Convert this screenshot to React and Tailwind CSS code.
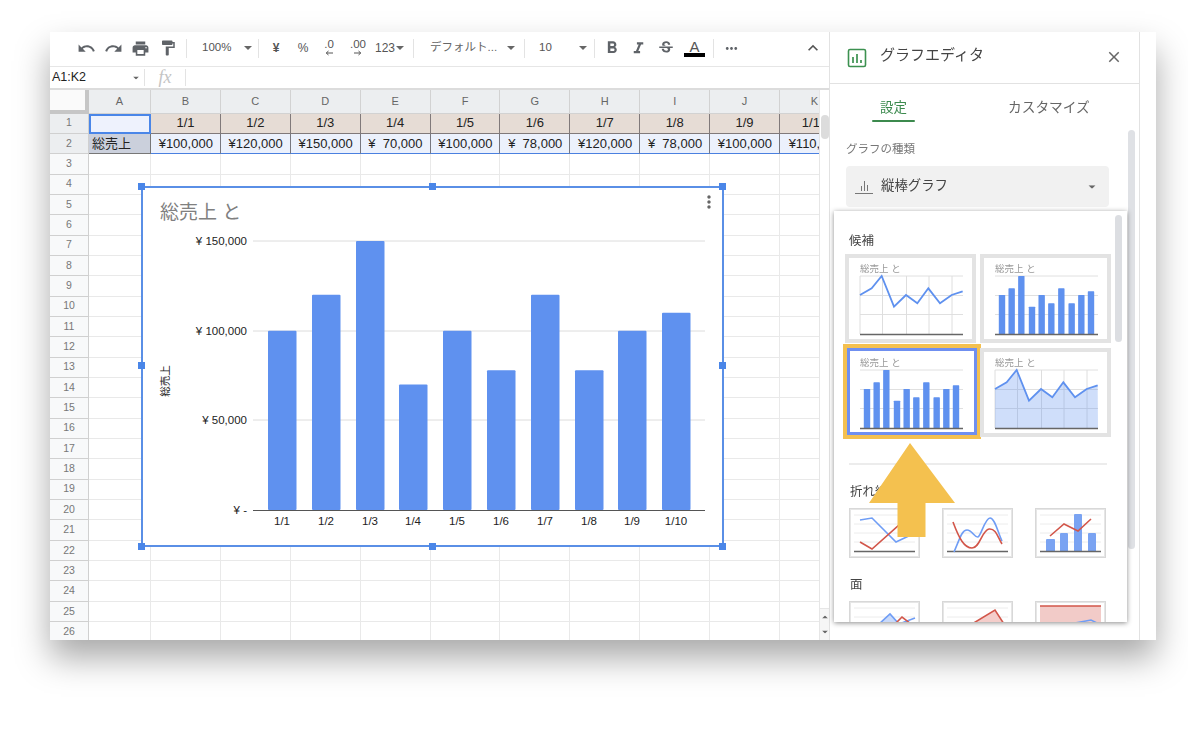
import React from 'react';
import {
  MdUndo, MdRedo, MdPrint, MdFormatPaint, MdFormatBold, MdFormatItalic,
  MdStrikethroughS, MdMoreHoriz, MdExpandLess, MdClose, MdMoreVert,
} from 'react-icons/md';

const COLS = ['B', 'C', 'D', 'E', 'F', 'G', 'H', 'I', 'J', 'K'];
const DATES = ['1/1', '1/2', '1/3', '1/4', '1/5', '1/6', '1/7', '1/8', '1/9', '1/10'];
const SALES = [100, 120, 150, 70, 100, 78, 120, 78, 100, 110];
const ROWS = Array.from({ length: 26 }, (_, i) => i + 1);

const Caret = ({ className = '' }) => (
  <svg width="8" height="4" viewBox="0 0 8 4" className={className}>
    <path d="M0 0h8L4 4z" fill="#666" />
  </svg>
);

const Divider = () => <div className="w-px h-[19px] bg-[#e3e3e3] shrink-0" />;

const ToolBtn = ({ children, w = 'w-[27px]' }) => (
  <div className={`${w} h-[24px] flex items-center justify-center shrink-0 text-[#5f6368]`}>{children}</div>
);

const Decimal = ({ label, dir }) => (
  <div className="flex flex-col items-center leading-none text-[11.5px] text-[#555] -mt-[1px]">
    <span>{label}</span>
    <svg width="8" height="6" viewBox="0 0 8 6" className="-mt-[1px]">
      {dir === 'left'
        ? <path d="M8 3H1.5M3.5 1L1.2 3l2.3 2" fill="none" stroke="#555" />
        : <path d="M0 3h6.5M4.5 1l2.3 2-2.3 2" fill="none" stroke="#555" />}
    </svg>
  </div>
);

const Toolbar = () => (
  <div className="h-[35px] flex items-center pl-[23px] pb-[2px] border-b border-[#e6e6e6] bg-white shrink-0">
    <ToolBtn><MdUndo size={19} /></ToolBtn>
    <ToolBtn><MdRedo size={19} /></ToolBtn>
    <ToolBtn><MdPrint size={19} /></ToolBtn>
    <ToolBtn><MdFormatPaint size={18} /></ToolBtn>
    <div className="w-[5px]" />
    <Divider />
    <div className="w-[71px] flex items-center pl-[15px] text-[11.5px] text-[#555]">
      100%<Caret className="ml-[13px]" />
    </div>
    <Divider />
    <ToolBtn w="w-[34px]"><span className="text-[12px] font-bold text-[#555]">¥</span></ToolBtn>
    <ToolBtn w="w-[20px]"><span className="text-[12px] text-[#555]">%</span></ToolBtn>
    <ToolBtn w="w-[32px]"><Decimal label=".0" dir="left" /></ToolBtn>
    <ToolBtn w="w-[26px]"><Decimal label=".00" dir="right" /></ToolBtn>
    <div className="w-[4px]" />
    <div className="w-[38px] flex items-center text-[12px] text-[#555]">
      123<Caret className="ml-[1px]" />
    </div>
    <Divider />
    <div className="w-[110px] flex items-center pl-[16px] text-[11.5px] text-[#666]">
      <span className="w-[77px] whitespace-nowrap">デフォルト...</span><Caret />
    </div>
    <Divider />
    <div className="w-[69px] flex items-center pl-[14px] text-[11.5px] text-[#555]">
      <span className="w-[40px]">10</span><Caret />
    </div>
    <Divider />
    <div className="w-[3px]" />
    <ToolBtn><MdFormatBold size={20} /></ToolBtn>
    <ToolBtn><MdFormatItalic size={19} /></ToolBtn>
    <ToolBtn><MdStrikethroughS size={18} /></ToolBtn>
    <div className="w-[2px]" />
    <ToolBtn>
      <div className="flex flex-col items-center leading-none">
        <span className="text-[15px] text-[#555] -mb-[1px]">A</span>
        <div className="w-[21px] h-[4px] bg-black" />
      </div>
    </ToolBtn>
    <div className="w-[5px]" />
    <Divider />
    <ToolBtn w="w-[34px]"><MdMoreHoriz size={17} /></ToolBtn>
    <div className="flex-1" />
    <div className="w-[30px] flex items-center pl-[4px] text-[#555]"><MdExpandLess size={20} /></div>
  </div>
);

const FormulaBar = () => (
  <div className="h-[23px] flex items-center border-b-2 border-[#dcdcdc] bg-white shrink-0">
    <div className="w-[94px] flex items-center pl-[2px] text-[12.5px] text-[#222]">
      <span className="w-[80px]">A1:K2</span><Caret className="scale-75" />
    </div>
    <div className="w-px h-[17px] bg-[#e3e3e3]" />
    <div className="w-[40px] text-center text-[18px] italic text-[#c4c4c4] font-['Liberation_Serif',serif] leading-none -mt-[2px]">fx</div>
    <div className="w-px h-[17px] bg-[#e3e3e3]" />
  </div>
);

const money = (v) => (v >= 100 ? `¥${v},000` : `¥  ${v},000`);

const Sheet = () => (
  <div className="grid grid-cols-[39px_62px_repeat(10,69.9px)] grid-rows-[23.5px] auto-rows-[20.35px] w-[769px] bg-white text-[13px] text-[#222]">
    <div className="bg-[#fafafa] border-r-4 border-b-4 border-[#c6c6c6]" />
    <div className="bg-[#eceef0] border-r border-b border-[#d2d2d2] flex items-center justify-center text-[11px] text-[#666]">A</div>
    {COLS.map((c) => (
      <div key={c} className="bg-[#eceef0] border-r border-b border-[#d2d2d2] flex items-center justify-center text-[11px] text-[#666]">{c}</div>
    ))}
    {ROWS.map((r) => (
      <React.Fragment key={r}>
        <div className={`${r < 3 ? 'bg-[#eceef0]' : 'bg-[#f8f9fa]'} border-r border-b border-[#d0d0d0] flex items-center justify-center text-[10.5px] text-[#777]`}>{r}</div>
        {r === 1 && <div className="bg-[#eef2fd] border-2 border-[#4a86e8]" />}
        {r === 2 && <div className="bg-[#cbd0dc] border-r border-b border-[#777] flex items-center pl-[3px] whitespace-nowrap">総売上</div>}
        {r > 2 && <div className="border-r border-b border-[#e9e9e9]" />}
        {COLS.map((c, i) => {
          if (r === 1) {
            return <div key={c} className="bg-[#e6dcd5] border-r border-b border-[#80797a] flex items-center justify-center whitespace-nowrap overflow-hidden">{DATES[i]}</div>;
          }
          if (r === 2) {
            return <div key={c} className="bg-[#ecf1fc] border-r border-b border-r-[#77777f] border-b-[#4a80e0] leading-[19px] text-right pr-[7px] whitespace-pre overflow-hidden">{money(SALES[i])}</div>;
          }
          return <div key={c} className="border-r border-b border-[#e9e9e9]" />;
        })}
      </React.Fragment>
    ))}
  </div>
);

const Handle = ({ className }) => <div className={`absolute w-[7px] h-[7px] bg-[#4a86e8] ${className}`} />;

const barX = [268, 312, 356, 399, 443, 487, 531, 575, 618, 662];

const Chart = () => (
  <div className="absolute left-[91px] top-[96px] w-[583px] h-[361px] bg-white border-2 border-[#5a8fe6]">
    <svg viewBox="143 188 579 357" className="w-full h-full">
      <text x="160" y="219" fontSize="19" fill="#808080">総売上 と</text>
      {[241, 331, 420].map((y) => (
        <line key={y} x1="253" x2="705" y1={y} y2={y} stroke="#dcdcdc" />
      ))}
      {[['¥ 150,000', 245], ['¥ 100,000', 335], ['¥ 50,000', 424], ['¥ -', 514]].map(([t, y]) => (
        <text key={t} x="247" y={y} fontSize="11.5" fill="#222" textAnchor="end">{t}</text>
      ))}
      {SALES.map((v, i) => (
        <rect key={i} x={barX[i]} y={510 - v * 1.793} width="28.5" height={v * 1.793} rx="1" fill="#5f91ef" />
      ))}
      <line x1="253" x2="705" y1="510.5" y2="510.5" stroke="#555" />
      {DATES.map((d, i) => (
        <text key={d} x={barX[i] + 14} y="525" fontSize="11.5" fill="#222" textAnchor="middle">{d}</text>
      ))}
      <text transform="translate(169 381) rotate(-90)" fontSize="10.5" fill="#222" textAnchor="middle">総売上</text>
    </svg>
    <MdMoreVert size={20} className="absolute right-[3px] top-[4px] text-[#666]" />
    <Handle className="-left-[5px] -top-[5px]" />
    <Handle className="left-[286px] -top-[5px]" />
    <Handle className="-right-[4px] -top-[5px]" />
    <Handle className="-left-[5px] top-[174px]" />
    <Handle className="-right-[4px] top-[174px]" />
    <Handle className="-left-[5px] -bottom-[5px]" />
    <Handle className="left-[286px] -bottom-[5px]" />
    <Handle className="-right-[4px] -bottom-[5px]" />
  </div>
);

// same sales data squeezed into the preview card, coordinates in card pixels
const thumbTops = [165, 145, 108, 200, 165, 190, 145, 190, 165, 154].map((y) => y / 3 - 14);
const thumbLineX = [90, 125, 155, 192, 228, 262, 295, 330, 365, 398].map((x) => x / 3 - 15);
const thumbBarX = [21, 50, 79, 111, 140, 169, 199, 230, 259, 288].map((x) => x / 3 + 15);
const linePts = thumbLineX.map((x, i) => `${x},${thumbTops[i]}`).join(' ');

const ThumbBase = ({ vLines }) => (
  <>
    <text x="15" y="17.5" fontSize="9.5" fill="#999">総売上 と</text>
    {[22, 41.5, 60.5].map((y) => <line key={y} x1="15" x2="118" y1={y} y2={y} stroke="#e0e0e0" />)}
    {vLines && [15, 37.5, 61.5, 84, 107].map((x) => <line key={x} x1={x} x2={x} y1="22" y2="80" stroke="#dedede" />)}
  </>
);

const Thumb = ({ kind, className = 'border-4 border-[#e3e3e3] w-[131px] h-[89px]', viewBox = '4 4 123 81' }) => (
  <div className={`bg-white ${className}`}>
    <svg viewBox={viewBox} className="w-full h-full block">
      <ThumbBase vLines={kind !== 'bar'} />
      {kind === 'area' && <polygon points={`15,80 ${linePts} 118,80`} fill="#5f91ef" fillOpacity="0.3" />}
      {kind === 'bar' && thumbTops.map((y, i) => (
        <rect key={i} x={thumbBarX[i] - 3.2} y={y} width="6.4" height={80 - y} rx="0.6" fill="#5f91ef" />
      ))}
      {kind !== 'bar' && <polyline points={linePts} fill="none" stroke="#5f91ef" strokeWidth="1.8" />}
      <line x1="15" x2="118" y1="80.5" y2="80.5" stroke="#666" strokeWidth="1.5" />
    </svg>
  </div>
);

const SmallThumb = ({ children }) => (
  <div className="w-[71px] h-[50px] bg-white border border-[#d8d8d8] outline outline-[#e6e6e6] -outline-offset-2">
    <svg viewBox="1 1 69 48" className="w-full h-full block">
      {[7, 16, 25, 34].map((y) => <line key={y} x1="5" x2="66" y1={y} y2={y} stroke="#ececec" />)}
      {children}
    </svg>
  </div>
);

const Base = () => <line x1="5" x2="66" y1="43.5" y2="43.5" stroke="#666" strokeWidth="1.3" />;
const BLUE = '#6f9df5';
const RED = '#d2564a';

const SectionLabel = ({ children, className = '' }) => (
  <div className={`text-[12.5px] text-[#444] leading-none ${className}`}>{children}</div>
);

const Picker = () => (
  <div className="absolute left-[4px] top-[179px] w-[293px] h-[411px] bg-white shadow-[0_1px_5px_rgba(0,0,0,0.45)] overflow-hidden">
    <div className="pl-[11px] pt-[24px]">
      <SectionLabel className="pl-[4px] h-[19px]">候補</SectionLabel>
      <div className="grid grid-cols-[131px_131px] gap-x-[4px] gap-y-[5px] h-[183px]">
        <Thumb kind="line" />
        <Thumb kind="bar" />
        <Thumb
          kind="bar"
          className="border-[3px] border-[#6f8ff0] outline-4 outline-[#f4c04f] w-[130px] h-[87px] ml-[2px]"
          viewBox="5 3 124 81"
        />
        <Thumb kind="area" />
      </div>
      <div className="w-[258px] ml-[4px] h-[2px] bg-[#ececec] mt-[26px]" />
      <SectionLabel className="pl-[5px] mt-[21px] h-[22px]">折れ線</SectionLabel>
      <div className="grid grid-cols-[71px_71px_71px] gap-x-[22px] pl-[4px]">
        <SmallThumb>
          <Base />
          <polyline points="11,12 23,10 47,34 66,25" fill="none" stroke={BLUE} strokeWidth="1.6" />
          <polyline points="11,34 23,41 49,18 67,5" fill="none" stroke={RED} strokeWidth="1.6" />
        </SmallThumb>
        <SmallThumb>
          <Base />
          <path d="M12 44C18 30 20 22 25 22S33 30 36 29 43 10 48 10 56 25 60 33" fill="none" stroke={BLUE} strokeWidth="1.6" />
          <path d="M11 14C17 30 22 40 30 40S40 22 47 21 56 30 60 36" fill="none" stroke={RED} strokeWidth="1.6" />
        </SmallThumb>
        <SmallThumb>
          <rect x="11" y="31" width="9" height="13" rx="1" fill="#7aa3f2" />
          <rect x="25" y="25" width="8" height="19" rx="1" fill="#7aa3f2" />
          <rect x="39" y="6" width="8" height="38" rx="1" fill="#7aa3f2" />
          <rect x="53" y="25" width="8" height="19" rx="1" fill="#7aa3f2" />
          <Base />
          <polyline points="15,28 29,16 43,23 56,11" fill="none" stroke={RED} strokeWidth="1.6" />
        </SmallThumb>
      </div>
      <SectionLabel className="pl-[5px] mt-[21px] h-[22px]">面</SectionLabel>
      <div className="grid grid-cols-[71px_71px_71px] gap-x-[22px] pl-[4px]">
        <SmallThumb>
          <polygon points="30,23 41,13 50,23" fill="#c9dafb" />
          <polyline points="30,23 41,13 50,23 66,17" fill="none" stroke={BLUE} strokeWidth="1.6" />
          <polyline points="46,23 53,16 62,23" fill="none" stroke={RED} strokeWidth="1.6" />
        </SmallThumb>
        <SmallThumb>
          <polygon points="14,23 30,23 53,9 62,23" fill="#f4cdca" />
          <polyline points="14,22 30,23 53,9 62,23" fill="none" stroke={RED} strokeWidth="1.6" />
        </SmallThumb>
        <SmallThumb>
          <rect x="5" y="5" width="61" height="40" fill="#f2cbc8" />
          <line x1="5" x2="66" y1="5" y2="5" stroke={RED} strokeWidth="1.4" />
          <polyline points="15,23 40,22 56,19 64,23" fill="none" stroke={BLUE} strokeWidth="1.6" />
        </SmallThumb>
      </div>
    </div>
    <div className="absolute left-[281px] top-[4px] w-[7px] h-[127px] rounded-full bg-[#dcdee2]" />
  </div>
);

const Panel = () => (
  <div className="relative w-[311px] border-l border-r border-[#e2e2e2] bg-white shrink-0">
    <div className="h-[52px] flex items-center border-b border-[#e2e2e2] pl-[17px]">
      <svg width="20" height="20" viewBox="0 0 20 20">
        <rect x="1.5" y="1.5" width="17" height="17" rx="1.5" fill="none" stroke="#3c9150" strokeWidth="1.6" />
        <path d="M6 9v6M10 6v9M14 12v3" stroke="#3c9150" strokeWidth="1.7" />
      </svg>
      <span className="ml-[13px] text-[15px] text-[#444] -mt-[4px]">グラフエディタ</span>
      <MdClose size={18} className="absolute left-[275px] top-[16px] text-[#666]" />
    </div>
    <div className="h-[38px] flex text-[13.5px] relative">
      <div className="w-[128px] pl-[50px] pt-[17px] text-[#3c8a4e] leading-none">設定</div>
      <div className="pl-[50px] pt-[17px] text-[#666] leading-none text-[13.7px]">カスタマイズ</div>
      <div className="absolute left-[42px] bottom-0 w-[43px] h-[2px] rounded bg-[#3c8a4e]" />
    </div>
    <div className="pl-[16px] pt-[22px]">
      <div className="text-[11.5px] text-[#777] leading-none">グラフの種類</div>
      <div className="mt-[10.5px] w-[263px] h-[41px] rounded bg-[#f1f1f1] flex items-center pl-[9px]">
        <svg width="18" height="14" viewBox="0 0 18 14">
          <path d="M0 13.5h18M6.5 11V6M9.5 11V1M12.5 11V5" stroke="#777" strokeWidth="1" fill="none" />
        </svg>
        <span className="ml-[8px] text-[13.4px] text-[#444]">縦棒グラフ</span>
        <Caret className="ml-[140px] scale-90" />
      </div>
    </div>
    <div className="absolute left-[298px] top-[98px] w-[7px] h-[419px] rounded-full bg-[#dfe1e5]" />
    <Picker />
  </div>
);

export default function App() {
  return (
    <div className="w-[1188px] h-[730px] overflow-hidden bg-white pt-[32px] pl-[50px] font-['Liberation_Sans','Noto_Sans_CJK_JP',sans-serif]">
      <div className="relative flex w-[1106px] h-[608px] bg-white shadow-[0_18px_32px_rgba(0,0,0,0.34)] blur-[0.4px]">
        <div className="w-[779px] shrink-0 flex flex-col">
          <Toolbar />
          <FormulaBar />
          <div className="flex flex-1 min-h-0">
            <div className="relative w-[769px] overflow-hidden">
              <Sheet />
              <Chart />
            </div>
            <div className="relative w-[10px] border-l border-[#e6e6e6] bg-white">
              <div className="absolute left-[1px] top-[25px] w-[8px] h-[24px] rounded bg-[#dcdcdc]" />
              <div className="absolute left-0 right-0 bottom-0 h-[32px] flex flex-col items-center justify-around bg-[#f6f6f6] border-t border-[#e6e6e6]">
                <Caret className="rotate-180 scale-75" />
                <Caret className="scale-75" />
              </div>
            </div>
          </div>
        </div>
        <Panel />
        {/* annotation arrow */}
        <svg width="86" height="94" viewBox="0 0 86 94" className="absolute left-[819px] top-[411px]">
          <path d="M41 0L86 60H56.5V94H28.5V60H0z" fill="#f4c14f" />
        </svg>
      </div>
    </div>
  );
}
